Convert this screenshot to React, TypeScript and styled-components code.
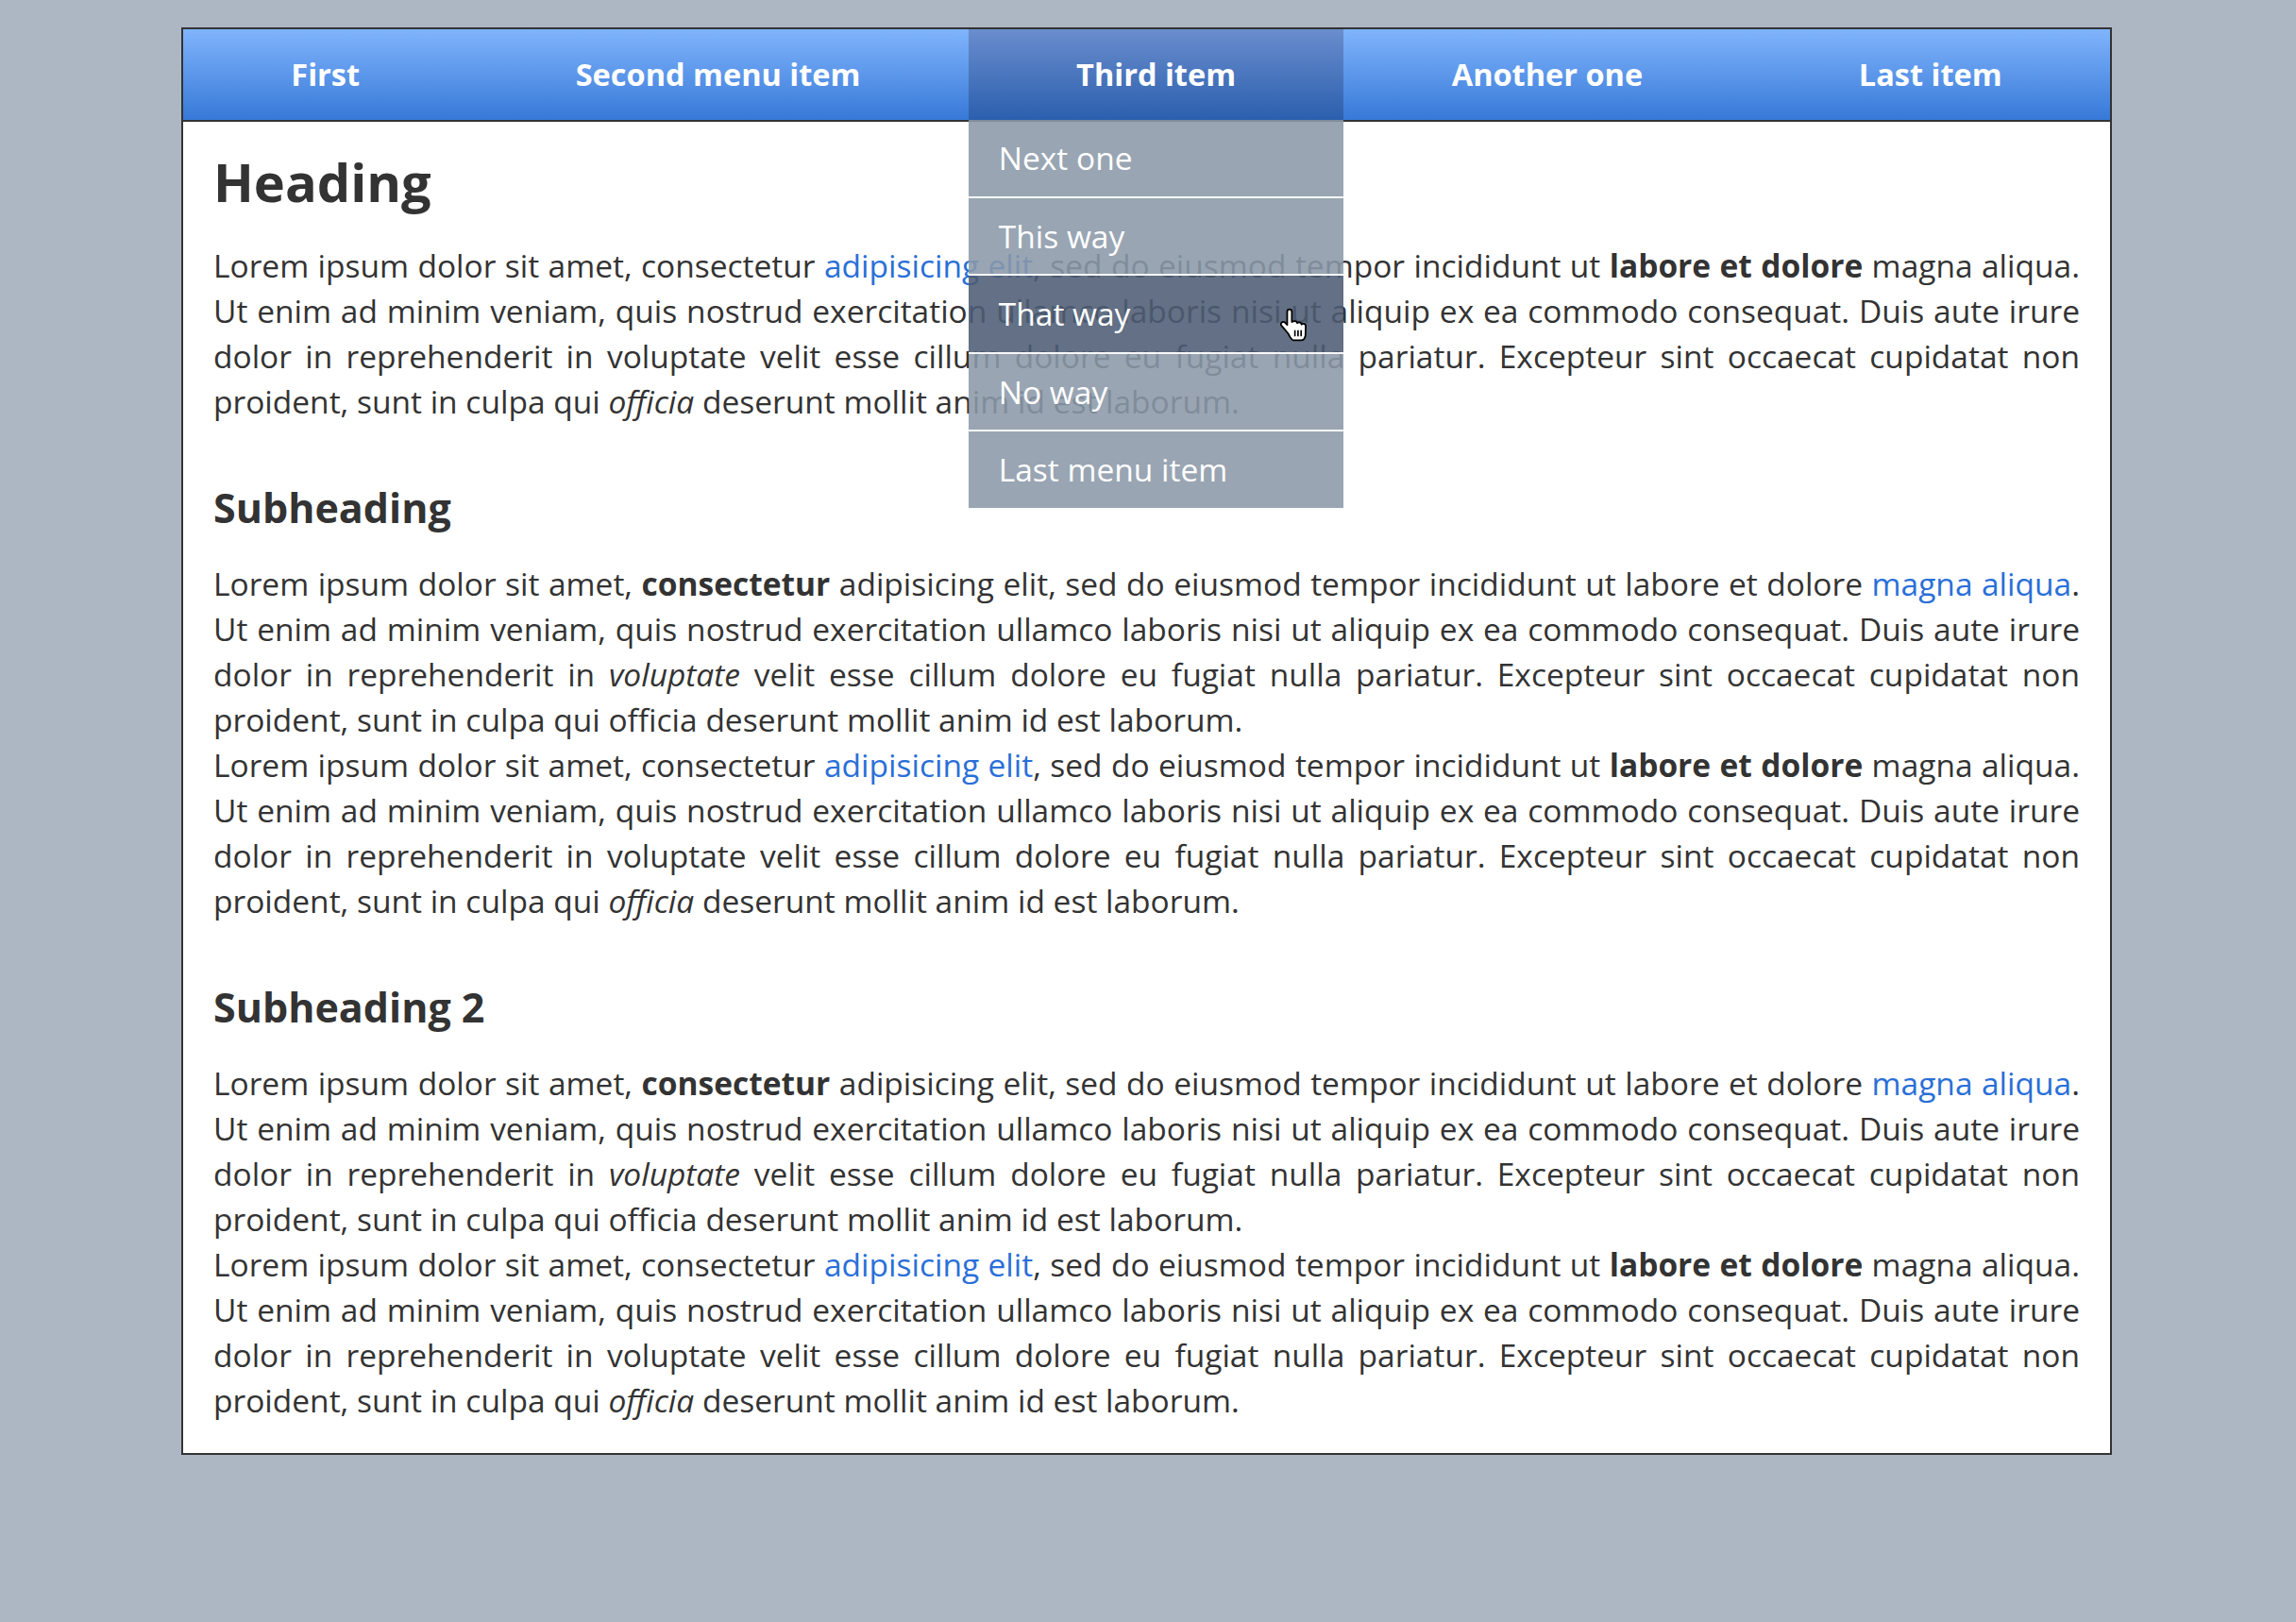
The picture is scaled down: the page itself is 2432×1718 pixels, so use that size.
import React from 'react'
import styled, { createGlobalStyle } from 'styled-components'

const FONT = `'Open Sans', 'Noto Sans', sans-serif`

const GlobalStyle = createGlobalStyle`
    html, body {
        margin: 0;
        padding: 0;
        background: #adb7c3;
    }
    body {
        font-family: ${FONT};
        color: #333;
    }
`

const Page = styled.div`
    padding: 29px 0 0 192px;
    min-height: 1718px;
    box-sizing: border-box;
`

const Frame = styled.div`
    width: 2045px;
    border: 2px solid #333;
    background: #fff;
    box-sizing: border-box;
`

const NavBar = styled.nav`
    display: flex;
    background: linear-gradient(#80b4fc, #3779d8);
    border-bottom: 2px solid #333;
`

const NavItem = styled.div<{ active?: boolean }>`
    flex: 1 1 auto;
    position: relative;
    text-align: center;
    color: #fff;
    font-weight: 700;
    font-size: 32.5px;
    line-height: 96px;
    white-space: nowrap;
    ${props => props.active && `
        background: linear-gradient(#6a8dcd, #2b5fae);
    `}
`

const Dropdown = styled.ul`
    position: absolute;
    top: 100%;
    left: 0;
    right: 0;
    margin: 0;
    padding: 0;
    list-style: none;
    text-align: left;
    z-index: 5;
`

const DropItem = styled.li<{ hover?: boolean }>`
    position: relative;
    padding: 16px 32px;
    line-height: 48.6px;
    font-size: 33.5px;
    font-weight: 400;
    color: #fff;
    background: ${props => props.hover ? 'rgba(77, 92, 116, 0.88)' : 'rgba(139, 152, 168, 0.88)'};
    border-bottom: 2px solid rgba(255, 255, 255, 0.95);
`

const Cursor = styled.svg`
    position: absolute;
    left: 328px;
    top: 34px;
    width: 32px;
    height: 36px;
`

const Content = styled.main`
    padding: 27px 32px 32px;
`

const Heading = styled.h1`
    margin: 0 0 29px;
    font-size: 56px;
    line-height: 72px;
    font-weight: 700;
`

const Subheading = styled.h2`
    margin: 61px 0 28px;
    font-size: 43px;
    line-height: 56px;
    font-weight: 700;
`

const Para = styled.p`
    margin: 0;
    font-size: 33.5px;
    line-height: 48px;
    text-align: justify;
`

const Link = styled.a`
    color: #2a6fd8;
    text-decoration: none;
`

const menu = ['First', 'Second menu item', 'Third item', 'Another one', 'Last item']
const subMenu = ['Next one', 'This way', 'That way', 'No way', 'Last menu item']

const ParaA = () => (
    <Para>
        Lorem ipsum dolor sit amet, consectetur <Link href="#">adipisicing elit</Link>, sed do eiusmod tempor incididunt ut <strong>labore et dolore</strong> magna aliqua.
        Ut enim ad minim veniam, quis nostrud exercitation ullamco laboris nisi ut aliquip ex ea commodo consequat. Duis aute irure
        dolor in reprehenderit in voluptate velit esse cillum dolore eu fugiat nulla pariatur. Excepteur sint occaecat cupidatat non
        proident, sunt in culpa qui <em>officia</em> deserunt mollit anim id est laborum.
    </Para>
)

const ParaB = () => (
    <Para>
        Lorem ipsum dolor sit amet, <strong>consectetur</strong> adipisicing elit, sed do eiusmod tempor incididunt ut labore et dolore <Link href="#">magna aliqua</Link>.
        Ut enim ad minim veniam, quis nostrud exercitation ullamco laboris nisi ut aliquip ex ea commodo consequat. Duis aute irure
        dolor in reprehenderit in <em>voluptate</em> velit esse cillum dolore eu fugiat nulla pariatur. Excepteur sint occaecat cupidatat non
        proident, sunt in culpa qui officia deserunt mollit anim id est laborum.
    </Para>
)

const HandCursor = () => (
    <Cursor viewBox="0 0 18 22">
        <path
            d="M6.5 1C5.7 1 5 1.7 5 2.5V11L3.6 9.6C3 9 2 9 1.4 9.6C0.8 10.2 0.8 11.1 1.4 11.7L5.5 16.5C6.5 18 7.5 21 9 21H14C15.5 21 16.5 19.5 16.8 18L17 12C17 11 16.3 10.3 15.5 10.3C15 10.3 14.6 10.5 14.3 10.8C14.2 10 13.5 9.4 12.7 9.4C12.2 9.4 11.8 9.6 11.5 9.9C11.3 9.1 10.6 8.6 9.8 8.6C9.2 8.6 8.7 8.8 8 9.2V2.5C8 1.7 7.3 1 6.5 1Z"
            fill="#fff"
            stroke="#000"
            strokeWidth="1.1"
            strokeLinejoin="round"
        />
        <path d="M10 14.5V18.5M12 14.5V18.5M14 14.5V18.5" stroke="#000" strokeWidth="1" />
    </Cursor>
)

const App = () => {
    return (
        <Page>
            <GlobalStyle />
            <Frame>
                <NavBar>
                    {menu.map(item => (
                        <NavItem key={item} active={item === 'Third item'}>
                            {item}
                            {item === 'Third item' && (
                                <Dropdown>
                                    {subMenu.map(sub => (
                                        <DropItem key={sub} hover={sub === 'That way'}>
                                            {sub}
                                            {sub === 'That way' && <HandCursor />}
                                        </DropItem>
                                    ))}
                                </Dropdown>
                            )}
                        </NavItem>
                    ))}
                </NavBar>
                <Content>
                    <Heading>Heading</Heading>
                    <ParaA />
                    <Subheading>Subheading</Subheading>
                    <ParaB />
                    <ParaA />
                    <Subheading>Subheading 2</Subheading>
                    <ParaB />
                    <ParaA />
                </Content>
            </Frame>
        </Page>
    )
}

export default App
